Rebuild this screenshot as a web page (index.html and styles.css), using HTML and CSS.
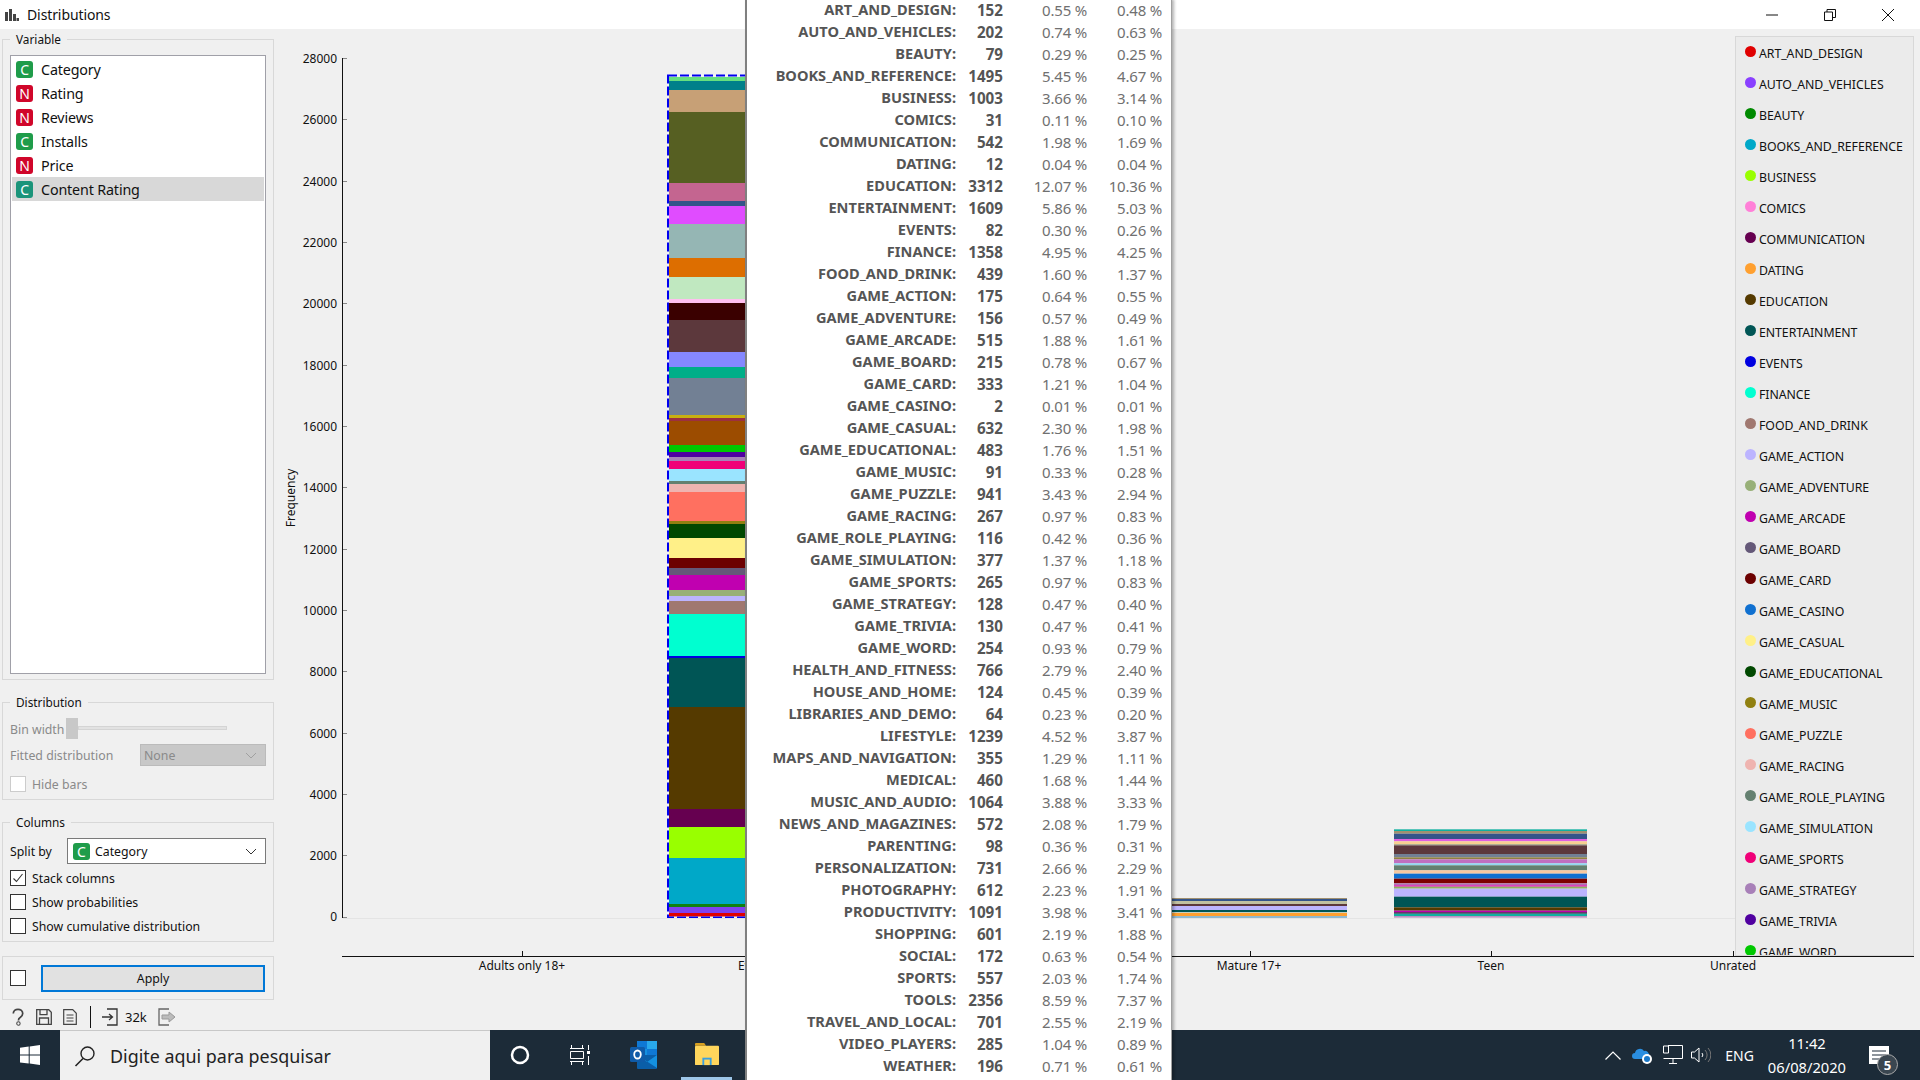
FILE: index.html
```html
<!DOCTYPE html>
<html lang="en">
<head>
<meta charset="utf-8">
<title>Distributions</title>
<link rel="stylesheet" href="styles.css">
</head>
<body>
<div class="window">
  <header class="titlebar">
    <svg class="app-icon" width="14" height="12" viewBox="0 0 14 12"><path d="M0 3h3v9H0zM4 0h3v12H4zM8 5h3v7H8zM11.500 9H14v3h-2.500z" fill="#444"/></svg>
    <span class="title">Distributions</span>
    <div class="win-buttons">
      <svg width="12" height="12" viewBox="0 0 12 12"><path d="M0 6h12" stroke="#111" fill="none"/></svg>
      <svg width="12" height="12" viewBox="0 0 12 12"><path d="M.5 3h8v8.500h-8zM3 3V.5h8.500v8H8.500" stroke="#111" fill="none"/></svg>
      <svg width="12" height="12" viewBox="0 0 12 12"><path d="M0 0l12 12M12 0L0 12" stroke="#111" fill="none"/></svg>
    </div>
  </header>
  <main class="main">
    <aside class="panel">
      <fieldset class="group group-var">
        <legend>Variable</legend>
        <ul class="varlist">
          <li><i class="badge c">C</i>Category</li>
          <li><i class="badge n">N</i>Rating</li>
          <li><i class="badge n">N</i>Reviews</li>
          <li><i class="badge c">C</i>Installs</li>
          <li><i class="badge n">N</i>Price</li>
          <li class="sel"><i class="badge t">C</i>Content Rating</li>
        </ul>
      </fieldset>
      <fieldset class="group group-dist">
        <legend>Distribution</legend>
        <div class="row dim row-bin"><span class="lbl-bin">Bin width</span><div class="slider"><b class="handle"></b><b class="groove"></b></div></div>
        <div class="row dim row-fit"><span class="lbl-fit">Fitted distribution</span><div class="combo combo-off">None<svg width="12" height="7" viewBox="0 0 12 7"><path d="M1 1l5 5 5-5" stroke="#a0a0a0" fill="none"/></svg></div></div>
        <label class="row dim check-row"><i class="check off"></i>Hide bars</label>
      </fieldset>
      <fieldset class="group group-col">
        <legend>Columns</legend>
        <div class="row row-split"><span class="lbl-split">Split by</span><div class="combo combo-on"><i class="badge c">C</i><span class="combo-text">Category</span><svg width="12" height="7" viewBox="0 0 12 7"><path d="M1 1l5 5 5-5" stroke="#333" fill="none"/></svg></div></div>
        <label class="row check-row"><i class="check"><svg width="14" height="14" viewBox="0 0 14 14"><path d="M2.500 7.500l3 3 6-7.500" stroke="#333" stroke-width="1.100" fill="none"/></svg></i>Stack columns</label>
        <label class="row check-row"><i class="check"></i>Show probabilities</label>
        <label class="row check-row"><i class="check"></i>Show cumulative distribution</label>
      </fieldset>
      <div class="group group-apply">
        <i class="check"></i>
        <div class="apply">Apply</div>
      </div>
      <div class="toolbar">
        <svg class="t-help" width="12" height="18" viewBox="0 0 14 20"><path d="M1.500 6C1.500 3 4 1 7 1s5.500 2 5.500 5c0 2.500-1.500 3.500-3 4.500C8 11.300 7.500 12 7.500 14" stroke="#444" stroke-width="2" fill="none"/><circle cx="7.500" cy="17.500" r="2" fill="none" stroke="#444" stroke-width="1.200"/></svg>
        <svg class="t-save" width="16" height="16" viewBox="0 0 16 16"><path d="M.7.700h12l2.600 2.600v12H.7zM4 .7v5h7v-5M3.500 15.300V9h9v6.300" stroke="#444" stroke-width="1.300" fill="none"/></svg>
        <svg class="t-doc" width="14" height="16" viewBox="0 0 14 16"><path d="M.7.700h9l3.600 3.600v11H.7zM3.500 6h7M3.500 9h7M3.500 12h7" stroke="#444" stroke-width="1.200" fill="none"/></svg>
        <span class="t-sep"></span>
        <svg class="t-in" width="16" height="18" viewBox="0 0 16 18"><path d="M5 1h10v16H5M0 9h10M7 6l3.500 3L7 12" stroke="#333" stroke-width="1.300" fill="none"/></svg>
        <span class="t-num">32k</span>
        <svg class="t-out" width="18" height="18" viewBox="0 0 18 18"><path d="M11 1H1v16h10" stroke="#666" stroke-width="1.300" fill="none"/><path d="M4 7h7V4l6 5-6 5v-3H4z" fill="#bbb" stroke="#999"/></svg>
      </div>
    </aside>
    <section class="plot">
      <svg class="chart" width="1646" height="1001" viewBox="274 29 1646 1001">
        <g id="bars"></g>
        <path d="M343 918.500H1735" class="baseline"/>
        <path d="M343 58.500h4M343 119.500h4M343 181.500h4M343 242.500h4M343 303.500h4M343 365.500h4M343 426.500h4M343 487.500h4M343 549.500h4M343 610.500h4M343 671.500h4M343 733.500h4M343 794.500h4M343 855.500h4M343 917.500h4" class="tick"/>
        <path d="M342.500 58v860M342 956.500H1914" class="axis"/>
        <path d="M522.500 951v5M764.500 951v5M1006.500 951v5M1250.500 951v5M1491.500 951v5M1733.500 951v5" class="axis"/>
        <g class="ylab">
          <text x="337" y="63">28000</text><text x="337" y="124">26000</text><text x="337" y="186">24000</text><text x="337" y="247">22000</text><text x="337" y="308">20000</text><text x="337" y="370">18000</text><text x="337" y="431">16000</text><text x="337" y="492">14000</text><text x="337" y="554">12000</text><text x="337" y="615">10000</text><text x="337" y="676">8000</text><text x="337" y="738">6000</text><text x="337" y="799">4000</text><text x="337" y="860">2000</text><text x="337" y="921">0</text>
        </g>
        <g class="xlab">
          <text x="522" y="970">Adults only 18+</text><text x="764" y="970">Everyone</text><text x="1249" y="970">Mature 17+</text><text x="1491" y="970">Teen</text><text x="1733" y="970">Unrated</text>
        </g>
        <text class="ytitle" transform="translate(295 498) rotate(-90)">Frequency</text>
      </svg>
      <ul class="legend" id="legend"></ul>
    </section>
  </main>
  <footer class="taskbar">
    <svg class="tb-win" width="20" height="20" viewBox="0 0 20 20"><path d="M0 2.800l8.700-1.200v8H0zM9.700 1.400L20 0v9.600H9.700zM0 10.600h8.700v8L0 17.400zM9.700 10.600H20V20L9.700 18.600z" fill="#fff"/></svg>
    <div class="search">
      <svg width="22" height="22" viewBox="0 0 22 22"><circle cx="13.500" cy="8.500" r="6.500" fill="none" stroke="#222" stroke-width="1.400"/><path d="M9 13.500L1.500 21" stroke="#222" stroke-width="1.600"/></svg>
      <span>Digite aqui para pesquisar</span>
    </div>
    <div class="tb-apps">
      <svg class="a-cortana" width="20" height="20" viewBox="0 0 20 20"><circle cx="10" cy="10" r="8" fill="none" stroke="#fff" stroke-width="2.500"/></svg>
      <svg class="a-view" width="21" height="20" viewBox="0 0 21 20"><path d="M1.500 0v3.500M12.500 0v3.500M0 3.500h14M.5 6.500h13v7H.5zM0 16.500h14M1.500 16.500V20M12.500 16.500V20M18.500 0v5M18.500 11v9" stroke="#fff" stroke-width="1" fill="none"/><rect x="17" y="6" width="3" height="3" fill="#fff"/></svg>
      <svg class="a-mail" width="30" height="30" viewBox="0 0 30 30"><rect x="8" y="1" width="20" height="15" fill="#0f78d4"/><rect x="18" y="1" width="10" height="8" fill="#29a8ea"/><rect x="8" y="9" width="10" height="8" fill="#1490df"/><path d="M8 15h20v13a1 1 0 0 1-1 1H9a1 1 0 0 1-1-1z" fill="#0a5ea8"/><path d="M8 15l10 7 10-7v13z" fill="#1490df"/><rect x="1" y="7" width="15" height="15" rx="1.500" fill="#0f5ba8"/><ellipse cx="8.500" cy="14.500" rx="3.300" ry="4" fill="none" stroke="#fff" stroke-width="1.800"/></svg>
      <div class="a-folder-wrap">
        <svg width="28" height="24" viewBox="0 0 28 26"><path d="M1 2a1 1 0 0 1 1-1h9l2 3H1z" fill="#d8a020"/><rect x="1" y="4" width="26" height="21" rx="1" fill="#ffd65c"/><path d="M9 25v-8h10v8z" fill="#3aa0e0"/><rect x="11" y="19" width="6" height="6" fill="#ffd65c"/></svg>
      </div>
    </div>
    <div class="tray">
      <svg class="tr-up" width="16" height="9" viewBox="0 0 16 9"><path d="M.5 8.500L8 1l7.500 7.500" stroke="#fff" stroke-width="1.200" fill="none"/></svg>
      <svg class="tr-cloud" width="22" height="20" viewBox="0 0 22 20"><path d="M3 14a3 3 0 0 1 0-6 5 5 0 0 1 9-2 4 4 0 0 1 5 4 3 3 0 0 1 0 4z" fill="#2a8ee0"/><circle cx="15" cy="14" r="5" fill="#fff"/><circle cx="15" cy="14" r="3" fill="#1a78c8"/></svg>
      <svg class="tr-net" width="20" height="20" viewBox="0 0 20 20"><path d="M5 .5h14.500v13H.5M.5 1h5v7h-5zM10 13.500v5M6 18.500h8" stroke="#fff" stroke-width="1" fill="none"/></svg>
      <svg class="tr-vol" width="20" height="18" viewBox="0 0 20 18"><path d="M.5 6h3l4.500-4v14l-4.500-4h-3z" stroke="#fff" fill="none"/><path d="M11 7a3 3 0 0 1 0 4" stroke="#fff" fill="none"/><path d="M14 4a7 7 0 0 1 0 10M17 2a10 10 0 0 1 0 14" stroke="#777" fill="none"/></svg>
      <span class="tr-lang">ENG</span>
      <div class="clock"><span>11:42</span><span>06/08/2020</span></div>
      <div class="notif">
        <svg width="20" height="18" viewBox="0 0 20 18"><path d="M0 0h20v18H0z" fill="#fff"/><path d="M3 5h14M3 9h14M3 13h9" stroke="#1c2b38" stroke-width="1.200"/></svg>
        <span class="notif-badge">5</span>
      </div>
    </div>
  </footer>
  <div class="tip" id="tip"></div>
</div>
<script src="app.js"></script>
</body>
</html>
```
FILE: styles.css
```css
* { box-sizing: border-box; }
html, body { margin: 0; height: 100%; overflow: hidden; }
body { font-family: "Noto Sans", "Open Sans", sans-serif; color: #111; background: #f0f0f0; }
ul { list-style: none; margin: 0; padding: 0; }
i { font-style: normal; }

.window { position: relative; width: 1920px; height: 1080px; display: flex; flex-direction: column; overflow: hidden; }

.titlebar { height: 29px; flex: none; background: #fff; display: flex; align-items: center; padding-left: 5px; }
.app-icon { margin-right: 8px; }
.title { font-size: 14px; letter-spacing: -0.1px; }
.win-buttons { margin-left: auto; display: flex; gap: 46px; padding-right: 26px; }

.main { flex: 1; display: flex; min-height: 0; }
.panel { width: 274px; flex: none; padding: 0 0 0 2px; display: flex; flex-direction: column; }

.group { margin: 0; border: 1px solid #d8d8d8; padding: 0 7px; min-width: 0; font-size: 12px; width: 272px; }
.group legend { padding: 0 6px; margin-left: 0; font-size: 11.800px; line-height: 16px; color: #111; }
.group-var { height: 649px; margin-top: 2px; }
.group-dist { height: 106px; margin-top: 14px; }
.group-col { height: 128px; margin-top: 14px; }
.group-apply { height: 44px; margin-top: 14px; display: flex; align-items: center; gap: 15px; }

.varlist { margin-top: 8px; height: 619px; background: #fff; border: 1px solid #a0a0a8; padding: 1px 1px; font-size: 14.300px; letter-spacing: -0.15px; }
.varlist li { height: 24px; display: flex; align-items: center; padding-left: 4px; gap: 8px; }
.varlist li.sel { background: #d8d8d8; }

.badge { width: 17px; height: 17px; border-radius: 3px; display: flex; align-items: center; justify-content: center; color: #fff; font-size: 14px; flex: none; font-style: normal; }
.badge.c { background: #1f9c4a; }
.badge.n { background: #d0062a; }
.badge.t { background: #1b947a; }

.row { display: flex; align-items: center; font-size: 12.300px; }
.dim { color: #8a8a8a; }
.row-bin { height: 22px; margin-top: 8px; }
.lbl-bin { width: 56px; }
.slider { position: relative; width: 161px; height: 22px; }
.handle { position: absolute; left: 0; top: 0; width: 12px; height: 21px; background: #c8c8c8; }
.groove { position: absolute; left: 12px; top: 8px; width: 149px; height: 4px; background: #e2e2e2; border: 1px solid #d4d4d4; }
.row-fit { height: 22px; margin-top: 4px; }
.lbl-fit { width: 130px; }
.combo { display: flex; align-items: center; font-size: 12.300px; }
.combo svg { margin-left: auto; }
.combo-off { width: 126px; height: 22px; background: #c8c8c8; border: 1px solid #bbb; padding: 0 8px 0 3px; color: #8a8a8a; }
.check-row { gap: 6px; }
.group-dist .check-row { margin-top: 9px; height: 18px; }
.check { width: 16px; height: 16px; border: 1px solid #333; background: #fff; display: block; flex: none; }
.check svg { display: block; }
.check.off { border-color: #ccc; }

.row-split { height: 26px; margin-top: 8px; margin-bottom: 2px; }
.lbl-split { width: 57px; }
.combo-on { width: 199px; height: 26px; background: #fff; border: 1px solid #7a7a7a; padding: 0 8px 0 5px; color: #111; }
.combo-text { margin-left: 5px; }
.group-col .check-row { height: 24px; }

.apply { width: 224px; height: 27px; border: 2px solid #0078d7; background: #e1e1e1; display: flex; align-items: center; justify-content: center; font-size: 12.300px; }

.toolbar { flex: 1; display: flex; align-items: center; padding-left: 10px; font-size: 13px; padding-top: 3px; }
.t-help { margin-right: 12px; }
.t-save { margin-right: 11px; }
.t-sep { width: 1px; height: 22px; background: #111; margin: 0 11px 0 13px; }
.t-in { margin-right: 7px; }
.t-num { margin-right: 11px; }

.plot { position: relative; flex: 1; }
.chart { display: block; font-size: 12px; }
.axis { stroke: #111; fill: none; stroke-width: 1; }
.tick { stroke: #888; fill: none; stroke-width: 1; }
.baseline { stroke: #e4e4e4; fill: none; }
.ylab text { text-anchor: end; fill: #111; }
.xlab text { text-anchor: middle; fill: #111; }
.ytitle { text-anchor: middle; fill: #111; }

.legend { position: absolute; left: 1461px; top: 7px; width: 179px; height: 920px; background: #ebebeb; border: 1px solid #d8d8d8; overflow: hidden; padding-top: 8px; font-size: 12.300px; letter-spacing: -0.05px; }
.legend li { height: 31px; display: flex; padding-left: 9px; gap: 3px; }
.dot { width: 11px; height: 11px; border-radius: 50%; flex: none; margin-top: 1px; }
.legend span { line-height: 16px; margin-top: 1px; }

.taskbar { height: 50px; flex: none; background: #1c2b38; display: flex; align-items: center; }
.tb-win { margin-left: 20px; margin-right: 20px; }
.search { width: 430px; height: 50px; background: #f0f0f0; border-top: 1px solid #c8c8c8; display: flex; align-items: center; padding-left: 14px; gap: 14px; font-size: 17.900px; color: #222; }
.tb-apps { display: flex; align-items: center; height: 50px; }
.a-cortana { margin-left: 20px; }
.a-view { margin-left: 40px; }
.a-mail { margin-left: 38px; }
.a-folder-wrap { width: 51px; height: 50px; margin-left: 22px; display: flex; align-items: center; justify-content: center; border-bottom: 3px solid #9dc6e8; }
.tray { margin-left: auto; display: flex; align-items: center; color: #fff; height: 50px; }
.tr-up { margin-right: 11px; }
.tr-cloud { margin-right: 9px; }
.tr-net { margin-right: 8px; }
.tr-vol { margin-right: 14px; }
.tr-lang { font-size: 14px; margin-right: 14px; }
.clock { display: flex; flex-direction: column; align-items: center; font-size: 14.700px; line-height: 24px; }
.notif { position: relative; margin-left: 23px; margin-right: 31px; width: 20px; height: 18px; }
.notif svg { display: block; }
.notif-badge { position: absolute; left: 8px; top: 8px; width: 21px; height: 21px; border-radius: 50%; background: #3a4650; border: 1px solid #aaa; font-size: 13px; font-weight: 700; display: flex; align-items: center; justify-content: center; }

.tip { position: absolute; left: 745px; top: -1px; width: 427px; height: 1081px; background: #fff; border-left: 2px solid #808080; border-right: 1px solid #a0a0a0; box-shadow: 2px 0 3px rgba(0,0,0,.3); overflow: hidden; font-size: 15.200px; line-height: 22px; display: grid; grid-template-columns: 209px 47px 84px 75px; grid-auto-rows: 22px; align-content: start; text-align: right; }
.tip b { font-weight: 700; color: #555; }
.tip b.name { font-size: 14.600px; line-height: 21px; }
.tip span { color: #707070; font-size: 15px; letter-spacing: -0.2px; }
```
FILE: app.js
```js
var NS = "http://www.w3.org/2000/svg";
var rows = [
["ART_AND_DESIGN",152,"0.55","0.48"],["AUTO_AND_VEHICLES",202,"0.74","0.63"],["BEAUTY",79,"0.29","0.25"],["BOOKS_AND_REFERENCE",1495,"5.45","4.67"],["BUSINESS",1003,"3.66","3.14"],["COMICS",31,"0.11","0.10"],["COMMUNICATION",542,"1.98","1.69"],["DATING",12,"0.04","0.04"],["EDUCATION",3312,"12.07","10.36"],["ENTERTAINMENT",1609,"5.86","5.03"],["EVENTS",82,"0.30","0.26"],["FINANCE",1358,"4.95","4.25"],["FOOD_AND_DRINK",439,"1.60","1.37"],["GAME_ACTION",175,"0.64","0.55"],["GAME_ADVENTURE",156,"0.57","0.49"],["GAME_ARCADE",515,"1.88","1.61"],["GAME_BOARD",215,"0.78","0.67"],["GAME_CARD",333,"1.21","1.04"],["GAME_CASINO",2,"0.01","0.01"],["GAME_CASUAL",632,"2.30","1.98"],["GAME_EDUCATIONAL",483,"1.76","1.51"],["GAME_MUSIC",91,"0.33","0.28"],["GAME_PUZZLE",941,"3.43","2.94"],["GAME_RACING",267,"0.97","0.83"],["GAME_ROLE_PLAYING",116,"0.42","0.36"],["GAME_SIMULATION",377,"1.37","1.18"],["GAME_SPORTS",265,"0.97","0.83"],["GAME_STRATEGY",128,"0.47","0.40"],["GAME_TRIVIA",130,"0.47","0.41"],["GAME_WORD",254,"0.93","0.79"],["HEALTH_AND_FITNESS",766,"2.79","2.40"],["HOUSE_AND_HOME",124,"0.45","0.39"],["LIBRARIES_AND_DEMO",64,"0.23","0.20"],["LIFESTYLE",1239,"4.52","3.87"],["MAPS_AND_NAVIGATION",355,"1.29","1.11"],["MEDICAL",460,"1.68","1.44"],["MUSIC_AND_AUDIO",1064,"3.88","3.33"],["NEWS_AND_MAGAZINES",572,"2.08","1.79"],["PARENTING",98,"0.36","0.31"],["PERSONALIZATION",731,"2.66","2.29"],["PHOTOGRAPHY",612,"2.23","1.91"],["PRODUCTIVITY",1091,"3.98","3.41"],["SHOPPING",601,"2.19","1.88"],["SOCIAL",172,"0.63","0.54"],["SPORTS",557,"2.03","1.74"],["TOOLS",2356,"8.59","7.37"],["TRAVEL_AND_LOCAL",701,"2.55","2.19"],["VIDEO_PLAYERS",285,"1.04","0.89"],["WEATHER",196,"0.71","0.61"]];
var tip = document.getElementById("tip");
rows.forEach(function (r) {
  [["b", r[0] + ":", "name"], ["b", r[1], ""], ["span", r[2] + " %", ""], ["span", r[3] + " %", ""]].forEach(function (c) {
    var e = document.createElement(c[0]); e.textContent = c[1]; if (c[2]) e.className = c[2]; tip.appendChild(e);
  });
});
var legend = [["ART_AND_DESIGN","#e00000"],["AUTO_AND_VEHICLES","#8a40ff"],["BEAUTY","#008a00"],["BOOKS_AND_REFERENCE","#00a8c8"],["BUSINESS","#99ff00"],["COMICS","#ff80d8"],["COMMUNICATION","#660050"],["DATING","#ffa030"],["EDUCATION","#553a00"],["ENTERTAINMENT","#005555"],["EVENTS","#0000e0"],["FINANCE","#00ffd0"],["FOOD_AND_DRINK","#a07870"],["GAME_ACTION","#bcb4ff"],["GAME_ADVENTURE","#98b078"],["GAME_ARCADE","#c000b0"],["GAME_BOARD","#645878"],["GAME_CARD","#6c0000"],["GAME_CASINO","#1070d0"],["GAME_CASUAL","#fff088"],["GAME_EDUCATIONAL","#004800"],["GAME_MUSIC","#908010"],["GAME_PUZZLE","#ff7060"],["GAME_RACING","#efb4b0"],["GAME_ROLE_PLAYING","#648070"],["GAME_SIMULATION","#9ae4ff"],["GAME_SPORTS","#f00078"],["GAME_STRATEGY","#a880b8"],["GAME_TRIVIA","#5000a0"],["GAME_WORD","#00c800"]];
var ul = document.getElementById("legend");
legend.forEach(function (l) {
  var li = document.createElement("li");
  var d = document.createElement("i"); d.className = "dot"; d.style.background = l[1];
  var s = document.createElement("span"); s.textContent = l[0];
  li.appendChild(d); li.appendChild(s); ul.appendChild(li);
});
var bars = document.getElementById("bars");
function seg(x, w, y0, y1, c) {
  var r = document.createElementNS(NS, "rect");
  r.setAttribute("x", x); r.setAttribute("y", y0); r.setAttribute("width", w); r.setAttribute("height", y1 - y0); r.setAttribute("fill", c);
  bars.appendChild(r);
}
function outline(stroke, dash) {
  var o = document.createElementNS(NS, "rect");
  o.setAttribute("x", 668); o.setAttribute("y", 75.5); o.setAttribute("width", 200); o.setAttribute("height", 842);
  o.setAttribute("fill", "none"); o.setAttribute("stroke", stroke); o.setAttribute("stroke-width", 2);
  if (dash) o.setAttribute("stroke-dasharray", dash);
  bars.appendChild(o);
}
var e = [[77,81,"#66e07f"],[81,90,"#00808a"],[90,112,"#c7a076"],[112,183,"#565f22"],[183,201,"#c46590"],[201,206,"#34548a"],[206,224,"#e04cff"],[224,258,"#95b6b4"],[258,277,"#dd6e00"],[277,299,"#c0e8c0"],[299,303,"#ffc0f0"],[303,320,"#3a0000"],[320,352,"#5c383c"],[352,367,"#8588ff"],[367,378,"#00ae88"],[378,415,"#728094"],[415,418,"#c8b010"],[418,421,"#9c3040"],[421,445,"#9c4c00"],[445,452,"#00c800"],[452,457,"#5000a0"],[457,461,"#a880b8"],[461,469,"#f00078"],[469,481,"#9ae4ff"],[481,484,"#648070"],[484,492,"#efb4b0"],[492,521,"#ff7060"],[521,524,"#908010"],[524,538,"#004800"],[538,558,"#fff088"],[558,568,"#6c0000"],[568,575,"#645878"],[575,590,"#c000b0"],[590,596,"#98b078"],[596,601,"#bcb4ff"],[601,614,"#a07870"],[614,656,"#00ffd0"],[656,658,"#0000e0"],[658,707,"#005555"],[707,809,"#553a00"],[809,827,"#660050"],[827,858,"#99ff00"],[858,904,"#00a8c8"],[904,907,"#108010"],[907,913,"#8040f0"],[913,917,"#e00000"]];
e.forEach(function (s) { seg(668, 193, s[0], s[1], s[2]); });
outline("#f4f4f4");
outline("#0000f0", "9 3");
var t = [[28,33,"#10b0a0"],[33,41,"#a09070"],[41,57,"#34548a"],[57,64,"#e060e0"],[64,72,"#f8d090"],[72,76,"#b0b090"],[76,102,"#5c383c"],[102,112,"#728094"],[112,118,"#908040"],[118,130,"#c070c0"],[130,136,"#90d8f0"],[136,151,"#648070"],[151,161,"#f8c8a0"],[161,176,"#1070d0"],[176,190,"#7c0000"],[190,196,"#b070b0"],[196,200,"#e000b0"],[200,206,"#90b060"],[206,230,"#bcb4ff"],[230,262,"#005555"],[262,272,"#553a00"],[272,277,"#c000b0"],[277,281,"#300030"],[281,288,"#10b0a0"],[288,293,"#c090c0"]];
t.forEach(function (s) { seg(1394, 193, 820 + s[0] / 3, 820 + s[1] / 3, s[2]); });
var m = [[898,899,"#a09070"],[899,901,"#34548a"],[901,904,"#c0c0a0"],[904,906,"#5c383c"],[906,910,"#bcb4ff"],[910,912,"#005555"],[912,913,"#c8d0c0"],[913,916,"#ffa030"],[916,918,"#90b8d0"]];
m.forEach(function (s) { seg(1100, 247, s[0], s[1], s[2]); });
```
